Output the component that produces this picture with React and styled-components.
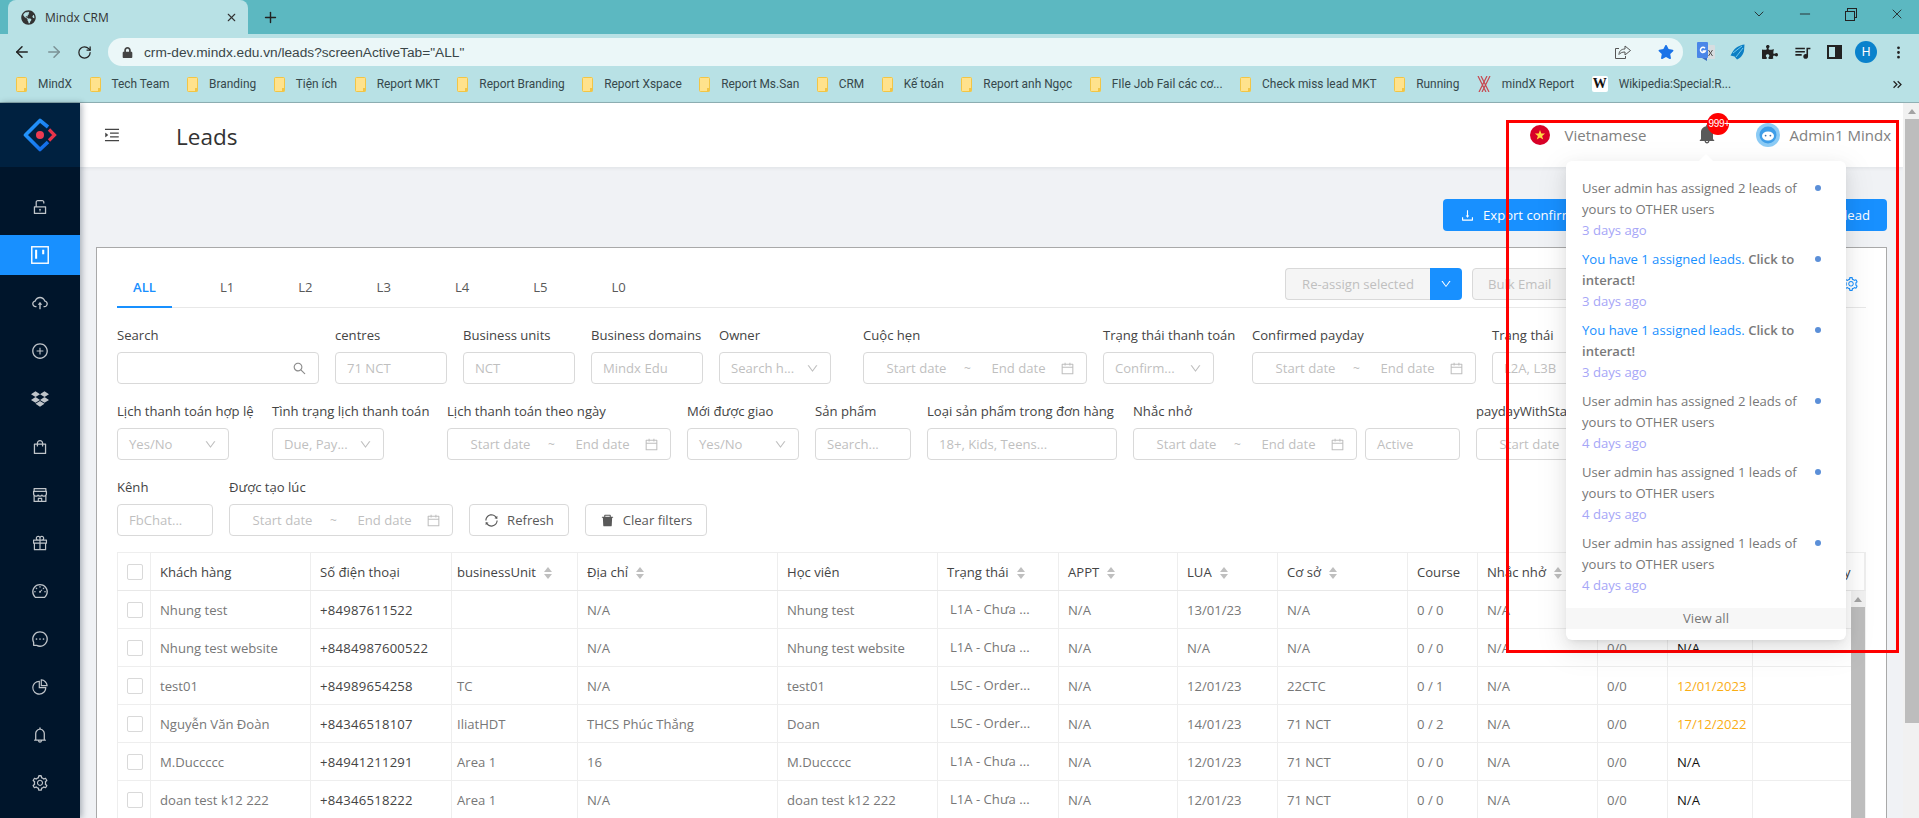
import React from 'react';
import styled, { createGlobalStyle } from 'styled-components';
import {
  AiOutlineUnlock, AiOutlineCloudUpload, AiOutlinePlusCircle,
  AiOutlineShopping, AiOutlineShop, AiOutlineGift, AiOutlineDashboard, AiOutlineMessage,
  AiOutlinePieChart, AiOutlineBell, AiOutlineSetting, AiOutlineMenuUnfold, AiOutlineSearch,
  AiOutlineCalendar, AiOutlineDown, AiOutlineDownload, AiOutlineSync, AiFillDelete, AiFillBell,
} from 'react-icons/ai';
import { FaGlobeAmericas, FaLock, FaStar, FaPuzzlePiece, FaDropbox } from 'react-icons/fa';
import { MdOutlineQueueMusic, MdKeyboardDoubleArrowRight } from 'react-icons/md';
import { BsThreeDotsVertical } from 'react-icons/bs';
import { ArrowLeft, ArrowRight, RotateCw, X, Plus, ChevronDown, Minus } from 'lucide-react';

const GlobalStyle = createGlobalStyle`
  html, body {
    margin: 0;
    height: 100%;
    overflow: hidden;
    background: #f0f2f5;
    font-family: "Open Sans", "Noto Sans", sans-serif;
    font-size: 13.1px;
    color: #444;
  }
  * { box-sizing: border-box; }
`;

const Root = styled.div`
  position: relative;
  width: 1919px;
  height: 818px;
  overflow: hidden;
`;

/* browser chrome */
const TabStrip = styled.div`
  height: 34px;
  background: #5cb8c1;
  display: flex;
  align-items: flex-end;
  padding-left: 8px;
  color: #222;
`;

const BrowserTab = styled.div`
  width: 240px;
  height: 34px;
  margin-top: 0;
  background: #b8e1e5;
  border-radius: 8px 8px 0 0;
  display: flex;
  align-items: center;
  padding: 0 10px 0 13px;
  font-size: 12px;
  color: #333;
  gap: 9px;

  span { flex: 1; }
`;

const NewTab = styled.div`
  width: 44px;
  height: 34px;
  display: flex;
  align-items: center;
  justify-content: center;
`;

const WindowControls = styled.div`
  margin-left: auto;
  display: flex;
  height: 34px;
  align-items: flex-start;
  padding-top: 6px;
  margin-right: 14px;
  gap: 30px;
  color: #222;
`;

const RestoreIcon = styled.div`
  position: relative;
  width: 16px;
  height: 16px;

  &::before, &::after {
    content: '';
    position: absolute;
    width: 8px;
    height: 8px;
    border: 1.2px solid #222;
  }
  &::before { top: 2px; right: 2px; }
  &::after { top: 5px; left: 2px; background: #5cb8c1; }
`;

const Toolbar = styled.div`
  height: 32px;
  background: #b8e1e5;
  display: flex;
  align-items: flex-start;
  padding-top: 4px;
  color: #222;
`;

const NavIcons = styled.div`
  width: 108px;
  display: flex;
  align-items: center;
  height: 28px;
  padding-left: 13px;
  gap: 14px;
`;

const AddressBar = styled.div`
  width: 1575px;
  height: 28px;
  background: #ebf7f8;
  border-radius: 14px;
  display: flex;
  align-items: center;
  padding: 0 9px 0 14px;
  font-family: "Liberation Sans", sans-serif;
  font-size: 13.7px;
  color: #3a4648;

  svg:first-child { margin-right: 11px; }
`;

const AddressActions = styled.div`
  margin-left: auto;
  display: flex;
  align-items: center;
  gap: 16px;
`;

const Extensions = styled.div`
  flex: 1;
  height: 28px;
  display: flex;
  align-items: center;
  padding-left: 12px;
  gap: 10px;
`;

const ExtSlot = styled.div`
  width: 22px;
  display: flex;
  justify-content: center;
`;

const ProfileBadge = styled.div`
  width: 22px;
  height: 22px;
  border-radius: 50%;
  background: #0a82cc;
  color: #fff;
  font-size: 12px;
  display: flex;
  align-items: center;
  justify-content: center;
  font-family: "Liberation Sans", sans-serif;
`;

const Bookmarks = styled.div`
  height: 37px;
  background: #b8e1e5;
  border-bottom: 1px solid #8fb0b4;
  display: flex;
  align-items: center;
  padding: 0 14px 0 16px;
  gap: 17.5px;
  font-family: "Roboto", sans-serif;
  font-size: 11.9px;
  color: #36484b;
  white-space: nowrap;
`;

const Bookmark = styled.div`
  display: flex;
  align-items: center;
  gap: 11px;
`;

const WikiIcon = styled.span`
  width: 16px;
  height: 16px;
  background: #fff;
  border-radius: 2px;
  color: #111;
  font-family: "Liberation Serif", serif;
  font-size: 14px;
  font-weight: 700;
  line-height: 16px;
  text-align: center;
`;

const MoreBookmarks = styled.div`
  margin-left: auto;
  display: flex;
`;

/* app shell */
const AppFrame = styled.div`
  display: flex;
  height: 715px;
`;

const Sidebar = styled.aside`
  position: relative;
  width: 80px;
  flex: none;
  background: #00152b;
  box-shadow: 2px 0 6px rgba(0, 21, 41, 0.3);
`;

const LogoArea = styled.div`
  height: 64px;
  background: #002140;
  display: flex;
  align-items: center;
  justify-content: center;
  margin-bottom: 20px;
`;

const MenuItem = styled.div`
  height: 40px;
  margin-bottom: 8px;
  display: flex;
  align-items: center;
  justify-content: center;
  background: ${props => (props.$active ? '#1890ff' : 'transparent')};
  color: ${props => (props.$active ? '#fff' : 'rgba(255, 255, 255, 0.75)')};
  font-size: 16px;

  svg { width: 18px; height: 18px; }
`;

const Main = styled.main`
  flex: 1;
  min-width: 0;
  display: flex;
  flex-direction: column;
`;

const TopBar = styled.header`
  height: 64px;
  flex: none;
  background: #fff;
  box-shadow: 0 1px 4px rgba(0, 21, 41, 0.08);
  display: flex;
  align-items: center;
  padding-left: 23px;
  color: #444;
`;

const PageTitle = styled.h1`
  margin: 0 0 0 55px;
  font-size: 22.5px;
  font-weight: 400;
  font-family: "Open Sans", sans-serif;
  color: #333;
  position: relative;
  top: 1px;
`;

const TopRight = styled.div`
  margin-left: auto;
  display: flex;
  align-items: center;
  font-size: 15px;
  color: #808080;
  padding-right: 12px;
`;

const Language = styled.div`
  display: flex;
  align-items: center;
  gap: 14px;
  width: 166px;
`;

const BellWrap = styled.div`
  position: relative;
  width: 22px;
  height: 24px;
  color: #595959;
  margin-right: 38px;
`;

const Badge = styled.span`
  position: absolute;
  z-index: 30;
  left: 11px;
  top: -10px;
  width: 22px;
  height: 22px;
  border-radius: 50%;
  background: #f00;
  color: #fff;
  font-size: 10px;
  letter-spacing: -0.3px;
  padding-left: 1px;
  line-height: 22px;
  text-align: left;
  white-space: nowrap;
  font-family: "Liberation Sans", sans-serif;
`;

const User = styled.div`
  display: flex;
  align-items: center;
  gap: 9px;
`;

const Content = styled.div`
  flex: 1;
  min-height: 0;
  overflow: hidden;
  padding: 32px 16px 0;
`;

const ActionBar = styled.div`
  display: flex;
  justify-content: flex-end;
  gap: 8px;
  margin-bottom: 16px;
`;

const PrimaryButton = styled.button`
  width: ${props => props.$w}px;
  height: 32px;
  border: none;
  border-radius: 4px;
  background: #1890ff;
  color: #fff;
  font: inherit;
  padding: 0 17px;
  display: flex;
  align-items: center;
  gap: 8px;
  justify-content: ${props => (props.$end ? 'flex-end' : 'flex-start')};
`;

const Card = styled.section`
  border: 1px solid #a9a9a9;
  border-bottom: none;
  background: #fff;
  padding: 20px 20px 0;
  height: 600px;
`;

const TabsBar = styled.div`
  height: 40px;
  border-bottom: 1px solid #e8e8e8;
  display: flex;
  align-items: flex-start;
`;

const TabItem = styled.div`
  height: 40px;
  padding: 8px 16px 0;
  margin-right: 32px;
  line-height: 22px;
  color: ${props => (props.$active ? '#1890ff' : '#595959')};
  font-weight: ${props => (props.$active ? 600 : 400)};
  border-bottom: 2px solid ${props => (props.$active ? '#1890ff' : 'transparent')};
`;

const TabTools = styled.div`
  margin-left: auto;
  display: flex;
  align-items: flex-start;
  color: #1890ff;
`;

const SplitLabel = styled.div`
  width: 145px;
  height: 32px;
  background: #f5f5f5;
  border: 1px solid #d9d9d9;
  border-right: none;
  border-radius: 4px 0 0 4px;
  color: #bfbfbf;
  text-align: center;
  line-height: 30px;
`;

const SplitArrow = styled.div`
  width: 32px;
  height: 32px;
  background: #1890ff;
  border-radius: 0 4px 4px 0;
  color: #fff;
  display: flex;
  align-items: center;
  justify-content: center;
  margin-right: 10px;
  font-size: 12px;
`;

const DisabledButton = styled.div`
  width: 120px;
  height: 32px;
  background: #f5f5f5;
  border: 1px solid #d9d9d9;
  border-radius: 4px;
  color: #bfbfbf;
  padding: 0 15px;
  line-height: 30px;
  margin-right: 251px;
`;

const GearSlot = styled.div`
  height: 32px;
  font-size: 16px;
  display: flex;
  align-items: center;
  margin-right: 7px;
`;

const Filters = styled.div`
  padding-top: 16px;
`;

const FilterRow = styled.div`
  display: flex;
  gap: 16px;
  margin-bottom: 16px;
  white-space: nowrap;
`;

const Field = styled.div`
  width: ${props => props.$w}px;
  flex: none;
`;

const Label = styled.div`
  height: 22px;
  line-height: 22px;
  margin-bottom: 6px;
  color: #444;
`;

const ControlRow = styled.div`
  display: flex;
  gap: 8px;
`;

const Control = styled.div`
  width: ${props => (props.$w ? `${props.$w}px` : '100%')};
  flex: none;
  height: 32px;
  border: 1px solid #d9d9d9;
  border-radius: 4px;
  background: #fff;
  padding: 0 11px;
  display: flex;
  align-items: center;
  justify-content: space-between;
  color: #bfbfbf;
  overflow: hidden;

  svg { flex: none; color: ${props => props.$iconColor || '#bfbfbf'}; }
`;

const DateText = styled.span`
  flex: 1;
  text-align: center;
`;

const DateSep = styled.span`
  padding: 0 6px;
  font-size: 12px;
`;

const GhostButton = styled.button`
  width: ${props => props.$w}px;
  height: 32px;
  align-self: flex-end;
  flex: none;
  border: 1px solid #d9d9d9;
  border-radius: 4px;
  background: #fff;
  color: #595959;
  font: inherit;
  display: flex;
  align-items: center;
  justify-content: center;
  gap: 8px;

  svg { font-size: 15px; }
`;

/* table */
const TableArea = styled.div`
  display: flex;
  margin-top: 16px;
  align-items: flex-start;
`;

const Table = styled.table`
  width: 1733px;
  table-layout: fixed;
  border-collapse: collapse;
  border-left: 1px solid #eee;
  border-top: 1px solid #eee;
  flex: none;
`;

const HeadCell = styled.th`
  height: 38px;
  padding: 0 8px 0 ${props => (props.$tight ? 5 : 9)}px;
  text-align: ${props => (props.$right ? 'right' : 'left')};
  font-weight: 500;
  color: #444;
  border-right: ${props => (props.$right ? 'none' : '1px solid #eee')};
  border-bottom: 1px solid #e8e8e8;
  white-space: nowrap;
  overflow: hidden;
  ${props => props.$right && 'padding-right: 0;'}
`;

const SortCarets = styled.span`
  display: inline-flex;
  flex-direction: column;
  gap: 2px;
  margin-left: 8px;
  vertical-align: middle;

  &::before, &::after {
    content: '';
    width: 0;
    height: 0;
    border-left: 4px solid transparent;
    border-right: 4px solid transparent;
  }
  &::before { border-bottom: 5px solid #bfbfbf; }
  &::after { border-top: 5px solid #bfbfbf; }
`;

const BodyCell = styled.td`
  height: 38px;
  padding: 0 8px 0 ${props => (props.$tight ? 5 : 9)}px;
  color: ${props => props.$color || '#777'};
  letter-spacing: ${props => (props.$spaced ? '0.25px' : 'normal')};
  border-right: ${props => (props.$last ? 'none' : '1px solid #eee')};
  border-bottom: 1px solid #eee;
  white-space: nowrap;
  overflow: ${props => (props.$fixed ? 'visible' : 'hidden')};
  ${props => props.$fixed && 'position: relative; box-shadow: 3px 0 4px rgba(0, 0, 0, 0.1);'}
`;

const StatusText = styled.span`
  padding-left: 3px;
  position: relative;
  top: -1px;
`;

const CheckBox = styled.span`
  display: block;
  width: 16px;
  height: 16px;
  border: 1px solid #d9d9d9;
  border-radius: 2px;
  background: #fff;
`;

const CheckCell = styled(BodyCell)`
  padding: 0 0 0 9px;
`;

const CheckHead = styled(HeadCell)`
  padding: 0 0 0 9px;
`;

const TableScroll = styled.div`
  width: 15px;
  flex: none;
`;

const ScrollHeadGap = styled.div`
  height: 39px;
  background: #fff;
  border-top: 1px solid #eee;
  border-right: 2px solid #eee;
  border-bottom: 1px solid #e8e8e8;
`;

const ScrollTrack = styled.div`
  height: 228px;
  background: #f1f1f1;
  padding: 0 1px 0 0;
`;

const ScrollArrow = styled.div`
  height: 16px;
  display: flex;
  justify-content: center;
  align-items: center;

  &::before {
    content: '';
    border-left: 4px solid transparent;
    border-right: 4px solid transparent;
    border-bottom: 5px solid #a3a3a3;
  }
`;

const ScrollThumb = styled.div`
  height: ${props => props.$h}px;
  background: #bdbdbd;
`;

const PageScroll = styled.div`
  width: 16px;
  flex: none;
  background: #f1f1f1;
  padding-left: 2px;
`;

/* notification popover */
const NotifyPopover = styled.div`
  position: absolute;
  z-index: 25;
  left: 1566px;
  top: 161px;
  width: 280px;
  height: 479px;
  background: #fff;
  border-radius: 6px;
  padding: 13px 0 0;
  box-shadow: 0 3px 6px -4px rgba(0, 0, 0, 0.12), 0 6px 16px rgba(0, 0, 0, 0.08), 0 9px 28px 8px rgba(0, 0, 0, 0.05);

  &::before {
    content: '';
    position: absolute;
    top: -5px;
    left: 135px;
    width: 10px;
    height: 10px;
    background: #fff;
    transform: rotate(45deg);
  }
`;

const NotifyItem = styled.div`
  display: flex;
  align-items: flex-start;
  height: 71px;
  padding: 4px 0 0 16px;
  line-height: 21px;
  position: relative;
`;

const NotifyBody = styled.div`
  width: 226px;
  color: #777;
`;

const NotifyLink = styled.span`
  color: #1890ff;
`;

const NotifyStrong = styled.span`
  font-weight: 600;
  color: #7a7a7a;
`;

const NotifyTime = styled.div`
  color: #a6a6f7;
`;

const NotifyDot = styled.span`
  width: 6px;
  height: 6px;
  margin: 7px 0 0 7px;
  border-radius: 50%;
  background: #5b8fd8;
  flex: none;
`;

const ViewAll = styled.div`
  height: 21px;
  margin-top: 8px;
  background: #f7f7f7;
  text-align: center;
  line-height: 21px;
  color: #777;
`;

const RedFrame = styled.div`
  position: absolute;
  z-index: 20;
  left: 1506px;
  top: 120px;
  width: 393px;
  height: 533px;
  border: 3px solid #f00;
  pointer-events: none;
`;

const FolderIcon = () => (
  <svg width="11" height="15" viewBox="0 0 11 15">
    <rect x="0.5" y="0.5" width="10" height="14" rx="1" fill="#ffe28c" stroke="#f2c545" />
    <rect x="8" y="11" width="2.5" height="3.5" fill="#f2c545" />
  </svg>
);

const MindxLogoSmall = () => (
  <svg width="14" height="16" viewBox="0 0 14 16">
    <path d="M1 0l8 16M4 0l8 16M13 0L5 16M10 0L2 16" stroke="#c8474f" strokeWidth="1.2" fill="none" />
  </svg>
);

const ShareIcon = () => (
  <svg width="16" height="14" viewBox="0 0 16 14" fill="none" stroke="#555" strokeWidth="1">
    <path d="M4 3.5H0.5v10h10V11" />
    <path d="M4 9.5c0-3.5 2.5-5.5 6-5.5V1l5.5 4.5L10 10V7c-3 0-4.8 1-6 2.5z" />
  </svg>
);

const TranslateIcon = () => (
  <svg width="18" height="20" viewBox="0 0 18 20">
    <rect x="8" y="3" width="10" height="14" rx="1" fill="#d7dde0" />
    <path d="M11.5 8l4 6M15.5 8l-4 6" stroke="#555" strokeWidth="1" />
    <rect x="0" y="0" width="11" height="16" rx="1" fill="#4a86e8" />
    <path d="M8 6.2a2.6 2.6 0 1 0 .4 2.8H5.6" stroke="#fff" strokeWidth="1.4" fill="none" />
    <path d="M5 16h5v3z" fill="#3a6fc4" />
  </svg>
);

const PlaneBellIcon = () => (
  <svg width="16" height="17" viewBox="0 0 16 17">
    <path d="M14.5 0.5C10 1 5 3.5 2.5 8L0.5 11.5l4 1 2.5 3c3-1 6-4.5 7-8.5z" fill="#0c7fc4" />
    <path d="M3 9l9-7M6 13l7-9" stroke="#7fd0ee" strokeWidth="0.9" />
  </svg>
);

const SidePanelIcon = () => (
  <svg width="15" height="14" viewBox="0 0 15 14">
    <rect x="1" y="1" width="13" height="12" fill="none" stroke="#222" strokeWidth="2" />
    <rect x="8" y="1" width="6" height="12" fill="#222" />
  </svg>
);

const BoardIcon = () => (
  <svg viewBox="0 0 14 14" fill="none" stroke="currentColor">
    <rect x="0.6" y="0.6" width="12.8" height="12.8" strokeWidth="1.1" />
    <path d="M4 3v7M9.5 3v3.5" strokeWidth="1.6" />
  </svg>
);

const AppLogo = () => (
  <svg width="34" height="34" viewBox="0 0 34 34" fill="none">
    <defs>
      <linearGradient id="logoBlue" x1="0" y1="0" x2="1" y2="1">
        <stop offset="0" stopColor="#29a0ff" />
        <stop offset="1" stopColor="#1068e8" />
      </linearGradient>
    </defs>
    <path d="M25 9L17 2.5 2.5 17 17 31.5 25 24" stroke="url(#logoBlue)" strokeWidth="3.6" strokeLinejoin="round" />
    <path d="M26 11.5L31.5 17 26 22.5" stroke="#e9344a" strokeWidth="3.2" />
    <circle cx="17" cy="17" r="4" fill="#ee3b52" />
  </svg>
);

const FlagIcon = () => (
  <svg width="20" height="20" viewBox="0 0 20 20">
    <circle cx="10" cy="10" r="10" fill="#d80027" />
    <path d="M10 5l1.3 3.6h3.8l-3 2.3 1.1 3.7-3.2-2.2-3.2 2.2 1.1-3.7-3-2.3h3.8z" fill="#ffda44" />
  </svg>
);

const AvatarIcon = () => (
  <svg width="24" height="24" viewBox="0 0 24 24">
    <circle cx="12" cy="12" r="12" fill="#8ccbf5" />
    <circle cx="12" cy="12" r="8.5" fill="#3f9ee8" />
    <ellipse cx="12" cy="13" rx="6" ry="4.6" fill="#fff" />
    <circle cx="9.6" cy="12.6" r="0.9" fill="#3f6fa8" />
    <circle cx="14.4" cy="12.6" r="0.9" fill="#3f6fa8" />
  </svg>
);

const bookmarks = [
  'MindX', 'Tech Team', 'Branding', 'Tiện ích', 'Report MKT', 'Report Branding', 'Report Xspace',
  'Report Ms.San', 'CRM', 'Kế toán', 'Report anh Ngọc', 'FIle Job Fail các cơ...', 'Check miss lead MKT', 'Running',
];

const menuIcons = [
  AiOutlineUnlock, BoardIcon, AiOutlineCloudUpload, AiOutlinePlusCircle, FaDropbox, AiOutlineShopping,
  AiOutlineShop, AiOutlineGift, AiOutlineDashboard, AiOutlineMessage, AiOutlinePieChart, AiOutlineBell, AiOutlineSetting,
];

const tabs = ['ALL', 'L1', 'L2', 'L3', 'L4', 'L5', 'L0'];

const columns = [
  { title: 'Khách hàng', width: 160 },
  { title: 'Số điện thoại', width: 141 },
  { title: 'businessUnit', width: 126, sort: true },
  { title: 'Địa chỉ', width: 200, sort: true },
  { title: 'Học viên', width: 160 },
  { title: 'Trạng thái', width: 121, sort: true },
  { title: 'APPT', width: 119, sort: true },
  { title: 'LUA', width: 100, sort: true },
  { title: 'Cơ sở', width: 130, sort: true },
  { title: 'Course', width: 70 },
  { title: 'Nhắc nhở', width: 120, sort: true },
  { title: 'Lead', width: 70 },
  { title: 'Ngày', width: 85 },
  { title: 'Payday', width: 98 },
];

const rows = [
  ['Nhung test', '+84987611522', '', 'N/A', 'Nhung test', 'L1A - Chưa ...', 'N/A', '13/01/23', 'N/A', '0 / 0', 'N/A', '0/0', 'N/A'],
  ['Nhung test website', '+8484987600522', '', 'N/A', 'Nhung test website', 'L1A - Chưa ...', 'N/A', 'N/A', 'N/A', '0 / 0', 'N/A', '0/0', 'N/A'],
  ['test01', '+84989654258', 'TC', 'N/A', 'test01', 'L5C - Order...', 'N/A', '12/01/23', '22CTC', '0 / 1', 'N/A', '0/0', '12/01/2023'],
  ['Nguyễn Văn Đoàn', '+84346518107', 'IliatHDT', 'THCS Phúc Thắng', 'Doan', 'L5C - Order...', 'N/A', '14/01/23', '71 NCT', '0 / 2', 'N/A', '0/0', '17/12/2022'],
  ['M.Duccccc', '+84941211291', 'Area 1', '16', 'M.Duccccc', 'L1A - Chưa ...', 'N/A', '12/01/23', '71 NCT', '0 / 0', 'N/A', '0/0', 'N/A'],
  ['doan test k12 222', '+84346518222', 'Area 1', 'N/A', 'doan test k12 222', 'L1A - Chưa ...', 'N/A', '12/01/23', '71 NCT', '0 / 0', 'N/A', '0/0', 'N/A'],
];

const notifications = [
  { kind: 'other', count: 2, time: '3 days ago' },
  { kind: 'mine', time: '3 days ago' },
  { kind: 'mine', time: '3 days ago' },
  { kind: 'other', count: 2, time: '4 days ago' },
  { kind: 'other', count: 1, time: '4 days ago' },
  { kind: 'other', count: 1, time: '4 days ago' },
];

const DateRange = ({ width }) => (
  <Control $w={width}>
    <DateText>Start date</DateText>
    <DateSep>~</DateSep>
    <DateText>End date</DateText>
    <AiOutlineCalendar size={15} />
  </Control>
);

const SelectBox = ({ text }) => (
  <Control>
    <span>{text}</span>
    <AiOutlineDown size={13} />
  </Control>
);

const cellColor = (colIndex, value) => {
  if (colIndex === 1) return '#444';
  if (colIndex === 12) return value === 'N/A' ? '#111' : '#faad14';
  return undefined;
};

const App = () => {
  return (
    <Root>
      <GlobalStyle />

      <TabStrip>
        <BrowserTab>
          <FaGlobeAmericas size={15} color="#333" />
          <span>Mindx CRM</span>
          <X size={13} />
        </BrowserTab>
        <NewTab><Plus size={17} /></NewTab>
        <WindowControls>
          <ChevronDown size={16} strokeWidth={1.3} />
          <Minus size={16} strokeWidth={1.3} />
          <RestoreIcon />
          <X size={16} strokeWidth={1.3} />
        </WindowControls>
      </TabStrip>

      <Toolbar>
        <NavIcons>
          <ArrowLeft size={18} />
          <ArrowRight size={18} color="#7b9195" />
          <RotateCw size={15} />
        </NavIcons>
        <AddressBar>
          <FaLock size={11} color="#444" />
          crm-dev.mindx.edu.vn/leads?screenActiveTab="ALL"
          <AddressActions>
            <ShareIcon />
            <FaStar size={16} color="#1a73e8" />
          </AddressActions>
        </AddressBar>
        <Extensions>
          <ExtSlot><TranslateIcon /></ExtSlot>
          <ExtSlot><PlaneBellIcon /></ExtSlot>
          <ExtSlot><FaPuzzlePiece size={16} color="#222" /></ExtSlot>
          <ExtSlot><MdOutlineQueueMusic size={19} color="#222" /></ExtSlot>
          <ExtSlot><SidePanelIcon /></ExtSlot>
          <ProfileBadge>H</ProfileBadge>
          <ExtSlot><BsThreeDotsVertical size={15} color="#222" /></ExtSlot>
        </Extensions>
      </Toolbar>

      <Bookmarks>
        {bookmarks.map(name => (
          <Bookmark key={name}>
            <FolderIcon />
            {name}
          </Bookmark>
        ))}
        <Bookmark>
          <MindxLogoSmall />
          mindX Report
        </Bookmark>
        <Bookmark>
          <WikiIcon>W</WikiIcon>
          Wikipedia:Special:R...
        </Bookmark>
        <MoreBookmarks><MdKeyboardDoubleArrowRight size={15} color="#222" /></MoreBookmarks>
      </Bookmarks>

      <AppFrame>
        <Sidebar>
          <LogoArea><AppLogo /></LogoArea>
          {menuIcons.map((Icon, i) => (
            <MenuItem key={i} $active={i === 1}><Icon /></MenuItem>
          ))}
        </Sidebar>

        <Main>
          <TopBar>
            <AiOutlineMenuUnfold size={18} />
            <PageTitle>Leads</PageTitle>
            <TopRight>
              <Language>
                <FlagIcon />
                Vietnamese
              </Language>
              <BellWrap>
                <AiFillBell size={22} />
                <Badge>999+</Badge>
              </BellWrap>
              <User>
                <AvatarIcon />
                Admin1 Mindx
              </User>
            </TopRight>
          </TopBar>

          <Content>
            <ActionBar>
              <PrimaryButton $w={329}>
                <AiOutlineDownload size={15} />
                Export confirmed payday
              </PrimaryButton>
              <PrimaryButton $w={107} $end>Add lead</PrimaryButton>
            </ActionBar>

            <Card>
              <TabsBar>
                {tabs.map((tab, i) => (
                  <TabItem key={tab} $active={i === 0}>{tab}</TabItem>
                ))}
                <TabTools>
                  <SplitLabel>Re-assign selected</SplitLabel>
                  <SplitArrow><AiOutlineDown /></SplitArrow>
                  <DisabledButton>Bulk Email</DisabledButton>
                  <GearSlot><AiOutlineSetting /></GearSlot>
                </TabTools>
              </TabsBar>

              <Filters>
                <FilterRow>
                  <Field $w={202}>
                    <Label>Search</Label>
                    <Control $iconColor="#8c8c8c"><span />
                      <AiOutlineSearch size={15} />
                    </Control>
                  </Field>
                  <Field $w={112}><Label>centres</Label><Control>71 NCT</Control></Field>
                  <Field $w={112}><Label>Business units</Label><Control>NCT</Control></Field>
                  <Field $w={112}><Label>Business domains</Label><Control>Mindx Edu</Control></Field>
                  <Field $w={128}><Label>Owner</Label><Control $w={112}><span>Search h...</span><AiOutlineDown size={13} /></Control></Field>
                  <Field $w={224}><Label>Cuộc hẹn</Label><DateRange /></Field>
                  <Field $w={133}><Label>Trạng thái thanh toán</Label><Control $w={111}><span>Confirm...</span><AiOutlineDown size={13} /></Control></Field>
                  <Field $w={224}><Label>Confirmed payday</Label><DateRange /></Field>
                  <Field $w={112}><Label>Trạng thái</Label><Control>L2A, L3B</Control></Field>
                </FilterRow>

                <FilterRow>
                  <Field $w={139}><Label>Lịch thanh toán hợp lệ</Label><Control $w={112}><span>Yes/No</span><AiOutlineDown size={13} /></Control></Field>
                  <Field $w={159}><Label>Tình trạng lịch thanh toán</Label><Control $w={112}><span>Due, Pay...</span><AiOutlineDown size={13} /></Control></Field>
                  <Field $w={224}><Label>Lịch thanh toán theo ngày</Label><DateRange /></Field>
                  <Field $w={112}><Label>Mới được giao</Label><SelectBox text="Yes/No" /></Field>
                  <Field $w={96}><Label>Sản phẩm</Label><Control>Search...</Control></Field>
                  <Field $w={190}><Label>Loại sản phẩm trong đơn hàng</Label><Control>18+, Kids, Teens...</Control></Field>
                  <Field $w={327}>
                    <Label>Nhắc nhở</Label>
                    <ControlRow>
                      <DateRange width={224} />
                      <Control $w={95}>Active</Control>
                    </ControlRow>
                  </Field>
                  <Field $w={224}><Label>paydayWithStatus</Label><DateRange /></Field>
                </FilterRow>

                <FilterRow>
                  <Field $w={96}><Label>Kênh</Label><Control>FbChat...</Control></Field>
                  <Field $w={224}><Label>Được tạo lúc</Label><DateRange /></Field>
                  <GhostButton $w={100}><AiOutlineSync />Refresh</GhostButton>
                  <GhostButton $w={122}><AiFillDelete />Clear filters</GhostButton>
                </FilterRow>
              </Filters>

              <TableArea>
                <Table>
                  <colgroup>
                    <col style={{ width: 33 }} />
                    {columns.map(col => <col key={col.title} style={{ width: col.width }} />)}
                  </colgroup>
                  <thead>
                    <tr>
                      <CheckHead><CheckBox /></CheckHead>
                      {columns.map((col, i) => (
                        <HeadCell key={col.title} $tight={i === 2} $right={i === columns.length - 1}>
                          {col.title}
                          {col.sort && <SortCarets />}
                        </HeadCell>
                      ))}
                    </tr>
                  </thead>
                  <tbody>
                    {rows.map((row, r) => (
                      <tr key={r}>
                        <CheckCell><CheckBox /></CheckCell>
                        {row.map((value, c) => (
                          <BodyCell key={c} $color={cellColor(c, value)} $fixed={c === 12} $tight={c === 2} $spaced={c === 1}>
                            {c === 5 ? <StatusText>{value}</StatusText> : value}
                          </BodyCell>
                        ))}
                        <BodyCell $last />
                      </tr>
                    ))}
                  </tbody>
                </Table>
                <TableScroll>
                  <ScrollHeadGap />
                  <ScrollTrack>
                    <ScrollArrow />
                    <ScrollThumb $h={212} />
                  </ScrollTrack>
                </TableScroll>
              </TableArea>
            </Card>
          </Content>
        </Main>

        <PageScroll>
          <ScrollArrow />
          <ScrollThumb $h={604} />
        </PageScroll>
      </AppFrame>

      <RedFrame />

      <NotifyPopover>
        {notifications.map((item, i) => (
          <NotifyItem key={i}>
            <NotifyBody>
              {item.kind === 'other' ? (
                <>User admin has assigned {item.count} leads of yours to OTHER users</>
              ) : (
                <>
                  <NotifyLink>You have 1 assigned leads.</NotifyLink>{' '}
                  <NotifyStrong>Click to interact!</NotifyStrong>
                </>
              )}
              <NotifyTime>{item.time}</NotifyTime>
            </NotifyBody>
            <NotifyDot />
          </NotifyItem>
        ))}
        <ViewAll>View all</ViewAll>
      </NotifyPopover>
    </Root>
  );
};

export default App;
